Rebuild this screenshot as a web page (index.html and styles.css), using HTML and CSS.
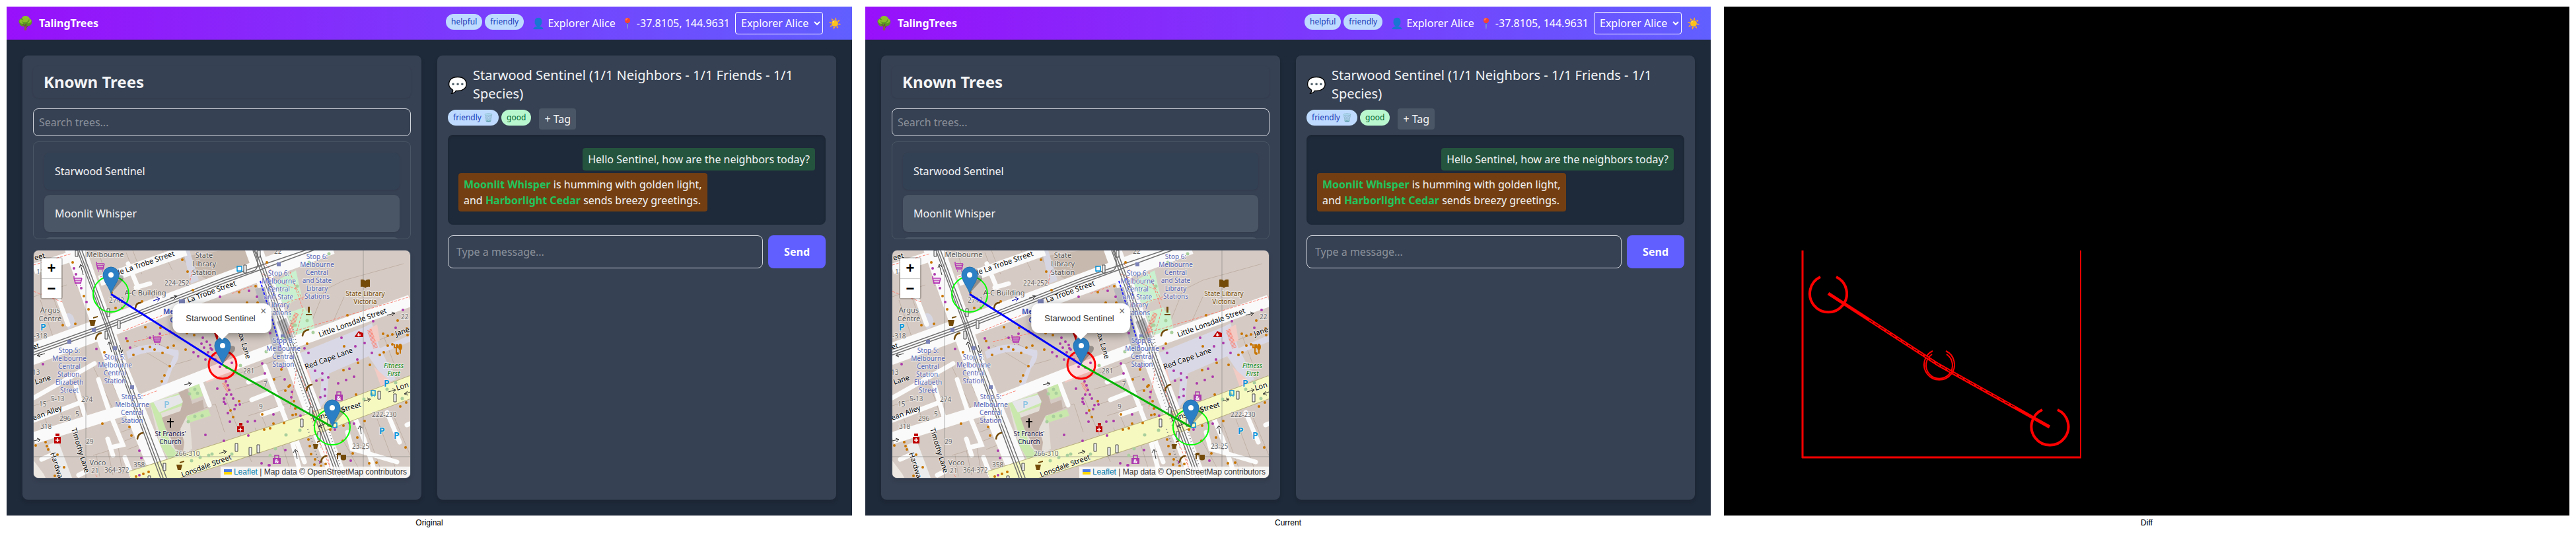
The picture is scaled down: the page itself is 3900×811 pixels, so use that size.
FILE: index.html
```html
<!DOCTYPE html>
<html lang="en">
<head>
<meta charset="utf-8">
<meta name="viewport" content="width=device-width, initial-scale=1">
<title>TalingTrees comparison</title>
<link rel="stylesheet" href="styles.css">
</head>
<body>
<main class="compare">
  <figure class="shot">
    <div class="pane" data-pane></div>
    <figcaption class="caption">Original</figcaption>
  </figure>
  <figure class="shot">
    <div class="pane" data-pane></div>
    <figcaption class="caption">Current</figcaption>
  </figure>
  <figure class="shot">
    <div class="pane diff">
      <svg class="diff-art" viewBox="0 0 1280 770" fill="none" stroke="#f00" aria-label="Changed pixels">
        <path d="M119 369V683" stroke-width="3"/>
        <path d="M540 369V683" stroke-width="2"/>
        <path d="M118 682H541" stroke-width="3"/>
        <path d="M146 409A28 28 0 1 0 170 409M482 610A28 28 0 1 0 505 610" stroke-width="4"/>
        <path d="M316 521A23 23 0 1 0 336 521M315 526A20 20 0 1 0 337 526" stroke-width="2"/>
        <path d="M158 434L325 542L493 636" stroke-width="5"/>
        <path d="M220 474L325 542L440 606" stroke="#000" stroke-width="1" stroke-dasharray="7 3"/>
      </svg>
    </div>
    <figcaption class="caption">Diff</figcaption>
  </figure>
</main>

<template id="pane-template">
  <header class="topbar">
    <div class="brand"><span class="brand-icon">🌳</span><span class="brand-name">TalingTrees</span></div>
    <div class="topbar-info">
      <div class="tags"><span class="tag blue">helpful</span><span class="tag blue">friendly</span></div>
      <span class="info">👤 Explorer Alice</span>
      <span class="info">📍 -37.8105, 144.9631</span>
      <select class="user-select" aria-label="User"><option>Explorer Alice</option></select>
      <button class="theme" type="button" aria-label="Toggle theme">☀️</button>
    </div>
  </header>
  <div class="content">
    <section class="card">
      <h1 class="card-title">Known Trees</h1>
      <input class="search" type="text" placeholder="Search trees..." aria-label="Search trees">
      <ul class="tree-list">
        <li class="tree selected">Starwood Sentinel</li>
        <li class="tree">Moonlit Whisper</li>
        <li class="tree">Harborlight Cedar</li>
      </ul>
      <div class="map">
        <svg class="map-art" viewBox="0 0 570 344" preserveAspectRatio="xMidYMid slice" aria-label="Street map">
          <rect width="570" height="344" fill="#d6cbc4"/>
          <!-- plot outlines -->
          <g stroke="#bfb0a6" stroke-width="1" fill="none">
            <path d="M0 70L50 52M10 75L36 150M28 66L44 112M100 8L112 45M140 3L155 42M150 0L164 36M175 60L185 80M195 0L210 30M60 212L80 270M90 175L120 240M110 180L125 215M128 262L158 252M132 275L162 264M138 288L166 277M142 301L172 290M90 310L130 298M100 342L95 310M120 340L112 302M135 338L128 298M158 255L192 344M170 130L205 150M152 143L205 175L240 165M235 248L275 232L289 275M289 220L330 320M300 190L370 165M305 210L375 190M315 232L380 210M325 250L390 230M335 268L345 300M345 250L362 290M390 280L400 320M375 290L392 344M420 110L440 60L470 45L560 20M450 115L470 70M405 190L420 230M500 120L520 175M530 130L545 170M570 118L510 140M0 235L45 220M15 247L20 262M40 240L46 258M470 290L500 344M500 262L530 344M520 255L548 330M545 250L570 310"/>
          </g>
          <path d="M222 10L285 0H330L335 24L300 34L262 44L240 30Z" fill="#c8b9ae"/>
          <path d="M226 0L236 0L250 45L238 50ZM47 97Q55 92 60 100L64 112L52 120Z" fill="#d6d6e2"/>
          <!-- plazas -->
          <g fill="#d9d8e6">
            <path d="M140 153Q175 135 200 147L219 151Q222 165 210 178L198 212L190 210L212 160Q180 145 143 164Z"/>
            <path d="M401 156L500 116L512 110L524 148L570 128L570 138L528 155L548 195L534 200L507 160L420 198ZM436 190L447 186L444 225L432 240Z"/>
          </g>
          <path d="M508 118L520 112L524 136L516 140ZM515 176L548 205L528 212ZM258 192L295 176L305 184L290 190L262 200ZM400 180L415 175L430 235L418 240Z" fill="#f2cbc4"/>
          <!-- lanes -->
          <g stroke="#fbfbfb" fill="none" stroke-width="7" stroke-linecap="round">
            <path d="M37 72L52 112M0 223L92 171M0 257L68 231M64 205L78 252M98 195L114 243L135 294L117 298M112 285L120 310M138 313L150 344M253 200L266 234M12 316L30 308M68 340L80 334M155 56L176 50M143 20L158 56M325 199L355 189M330 226L358 215M346 248L376 238M350 175L384 262L406 344M395 280L410 320M475 275L482 300L550 320M487 255L500 285L515 330M535 245L554 290M565 264L570 262"/>
          </g>
          <path d="M0 344V318L15 338L18 344Z" fill="#eee8e2"/>
          <path d="M22 294L37 288L58 344H40Z" fill="#ececec"/>
          <!-- parks and church -->
          <path d="M176 230L228 210L235 240L240 300L207 323L190 290Z" fill="#e4dfd8"/>
          <path d="M176 230L188 232L216 320L206 323ZM177 231L226 214L228 234L190 247ZM233 203L250 200L256 220L240 226ZM231 251L264 240L268 250L234 261ZM186 285L202 290L222 310L206 318Z" fill="#c9e8ac"/>
          <path d="M181 229L222 218L226 230L190 245Z" fill="#e6e6e9"/>
          <path d="M194 253L222 243L226 228L219 215L233 209L240 232L256 226L258 240L232 250L222 270L228 290L226 305L214 300L208 285L200 270Z" fill="#c3b2a8"/>
          <path d="M360 50L397 30L406 70L380 84ZM383 95L410 86L428 124L396 130ZM400 95L420 90L426 122Z" fill="#c9f0cf"/>
          <!-- main streets -->
          <g fill="none" stroke="#fafafa">
            <path d="M0 28L60 8M100 46L230 0" stroke-width="16"/>
            <path d="M0 284L132 243L169 224L279 181L359 151L570 76" stroke-width="18"/>
            <path d="M62 -5L128 181L198 350" stroke-width="31"/>
            <path d="M-5 158L289 50L450 -10" stroke-width="32"/>
            <path d="M332 -5L399 181L464 350" stroke-width="26"/>
          </g>
          <path d="M149 350L289 306L426 261L575 205" fill="none" stroke="#b9b07e" stroke-width="34"/>
          <path d="M149 350L289 306L426 261L575 205" fill="none" stroke="#f6f9c0" stroke-width="32"/>
          <path d="M335 58L366 160L378 155L350 55ZM368 108L380 138L394 132L382 102Z" fill="#b9b9bd"/>
          <!-- footpaths -->
          <g fill="none" stroke="#fa8072" stroke-width="1" stroke-dasharray="4 2">
            <path d="M0 22L56 5M0 62L44 78M135 122L180 104L215 90M345 35L400 60M388 32L408 90L396 130M350 20L362 32M152 138L215 124M392 45L408 76M355 88L410 70M300 65L330 54M405 190L440 290L452 344M398 180L388 240M166 220L188 212M100 40L118 36M90 335L97 344M425 270L455 344M385 125L570 70M240 30L236 50"/>
          </g>
          <path d="M343 46L375 150M354 42L366 72" fill="none" stroke="#22f" stroke-width="2" stroke-dasharray="4 2"/>
          <g fill="none" stroke="#777" stroke-width="2" stroke-dasharray="1 4">
            <path d="M385 150L436 300M395 140L405 180M415 270L440 344M446 270L470 344M340 20L366 60M388 100L400 150"/>
          </g>
          <path d="M508 120L518 148M398 95L386 127M288 200L296 214" fill="none" stroke="#fa8072" stroke-width="7" stroke-dasharray="1 1"/>
          <!-- tram tracks -->
          <g fill="none" stroke="#707070" stroke-width="1.5">
            <path d="M69 0L112 114L132 176L196 344M73 0L116 114L137 176L201 344M66 0L109 114L129 176L192 344"/>
            <path d="M0 154L112 114L289 45L335 30Q344 22 334 0M0 158L112 118L289 49L450 -10M0 150L112 110L289 41L440 -10"/>
            <path d="M332 0L398 178L460 344M336 0L402 178L464 344M340 0L406 178L468 344"/>
          </g>
          <path d="M79 0V344M499 0V344M0 312H570" stroke="#777" stroke-opacity=".55" stroke-width="1"/>
          <g fill="#7a82b8"><path d="M51 135h6v6h-6zM88 117h6v6h-6zM120 145h6v6h-6zM220 74h9v9h-9zM368 18h6v6h-6zM374 127h6v6h-6zM146 204h6v6h-6z"/></g>
          <!-- tree canopies -->
          <path d="M447 5h0M417 18h0M399 54h0M414 106h0M377 133h0M396 113h0M394 113h0M423 124h0M352 153h0M313 174h0M244 210h0M248 216h0M236 217h0M244 251h0M255 250h0M234 259h0M239 318h0M252 313h0M265 310h0M300 308h0M358 310h0M366 300h0M382 279h0M403 272h0M425 255h0M500 225h0M535 210h0M512 217h0M548 200h0M558 224h0M475 238h0M398 238h0M270 308h0M275 320h0" fill="none" stroke="#a9cf9d" stroke-width="5" stroke-linecap="round"/>
          <!-- points of interest -->
          <path d="M59 18h0M76 69h0M83 89h0M124 87h0M134 87h0M164 77h0M241 60h0M63 111h0M44 113h0M169 116h0M192 117h0M142 137h0M107 154h0M151 158h0M165 149h0M176 146h0M183 150h0M195 155h0M203 147h0M206 175h0M212 144h0M225 14h0M233 32h0M230 150h0M118 64h0M243 128h0M232 125h0M353 18h0M336 54h0M311 63h0M323 79h0M339 79h0M475 98h0M414 141h0M470 145h0M491 170h0M529 126h0M536 129h0M543 127h0M551 106h0M565 118h0M566 128h0M543 142h0M536 144h0M530 154h0M524 158h0M551 156h0M469 181h0M509 173h0M375 180h0M364 195h0M381 212h0M386 206h0M394 228h0M396 239h0M397 248h0M392 249h0M346 248h0M298 242h0M302 252h0M311 228h0M349 271h0M358 269h0M363 262h0M379 261h0M388 204h0M416 286h0M418 296h0M420 308h0M426 316h0M425 324h0M488 218h0M490 283h0M469 265h0M468 288h0M449 271h0M501 258h0M483 307h0M508 322h0M519 321h0M563 298h0M555 236h0M564 230h0M104 262h0M145 267h0M148 280h0M18 290h0M20 296h0M22 301h0M36 309h0M46 328h0M32 341h0M3 295h0M155 342h0M166 338h0M174 335h0M198 189h0M194 198h0M435 326h0M442 323h0" fill="none" stroke="#c77400" stroke-width="4" stroke-linecap="round"/>
          <path d="M61 27h0M64 36h0M72 57h0M80 78h0M95 149h0M14 172h0M140 133h0M146 147h0M176 132h0M191 126h0M206 122h0M242 154h0M282 70h0M254 141h0M258 147h0M262 138h0M267 143h0M270 150h0M264 154h0M272 158h0M256 132h0M249 160h0M260 165h0M275 165h0M268 148h0M326 61h0M338 70h0M358 125h0M410 148h0M416 155h0M346 171h0M466 132h0M487 145h0M501 140h0M514 107h0M559 90h0M548 117h0M512 155h0M490 165h0M478 179h0M426 182h0M437 186h0M428 197h0M437 196h0M446 192h0M461 201h0M473 196h0M485 191h0M434 222h0M441 220h0M441 210h0M390 222h0M350 186h0M376 176h0M380 195h0M391 214h0M404 250h0M363 248h0M291 198h0M294 204h0M296 211h0M292 218h0M290 232h0M299 218h0M302 224h0M294 246h0M297 259h0M306 234h0M312 233h0M304 240h0M324 259h0M335 258h0M325 280h0M288 288h0M381 302h0M345 322h0M356 325h0M278 209h0M288 224h0M288 229h0M260 279h0M160 303h0M163 314h0M160 340h0M456 271h0M478 261h0M485 262h0M480 318h0M357 325h0M434 320h0M282 176h0M292 177h0M300 170h0" fill="none" stroke="#ac39ac" stroke-width="4" stroke-linecap="round"/>
          <!-- traffic signals -->
          <g fill="#eee" stroke="#444">
            <path d="M63 0h4v9h-4zM111 88h4v12h-4zM127 106h4v12h-4zM108 122h4v12h-4zM339 0h4v10h-4zM318 22h4v12h-4zM196 322h4v11h-4zM404 255h4v12h-4zM418 237h4v12h-4zM430 274h4v12h-4zM305 292h4v12h-4zM326 298h4v12h-4zM338 294h4v12h-4zM521 213h4v12h-4zM545 217h4v12h-4zM445 254h4v12h-4zM173 341h4v5h-4z"/>
          </g>
          <!-- one-way arrows -->
          <g fill="none" stroke="#333">
            <path d="M75 37L71 22M69 26L71 21L75 25M17 156L6 159M9 156L5 159L10 161M118 154L114 139M112 143L114 138L118 142M130 143L133 154M129 151L133 155L135 150M207 72L216 69M212 68L217 69L213 73M228 203L238 201M234 199L239 201L235 205M535 98L546 95M542 93L547 95L543 99M0 288L9 286M5 284L10 286L6 290M281 307L291 304M287 302L292 304L288 308M500 228L509 225M505 223L510 225L506 229M537 214L547 211M543 209L548 211L544 215M570 214L562 217M566 213L561 217L567 219M442 262L432 266M436 262L431 266L437 268M399 315L396 302M393 306L396 301L400 305M496 278L494 266M491 270L494 265L498 269"/>
            <path d="M181 76L190 73M186 71L191 73L187 77" stroke="#00a"/>
          </g>
          <!-- symbols -->
          <g fill="none" stroke="#b535b5" stroke-width="1.5">
            <path d="M107 20H95L97 28H105L107 20M96 23H106M97 26H105M98 31h1M104 31h1M94 18h2"/>
            <path d="M73 42H61L63 50H71L73 42M62 45H72M63 48H71M64 53h1M70 53h1M60 40h2M193 131H181L183 139H191L193 131M182 134H192M183 137H191M184 142h1M190 142h1M180 129h2"/>
          </g>
          <g fill="none" stroke="#734a08" stroke-width="2.5" stroke-linecap="round">
            <path d="M154 87Q155 79 162 79M94 134Q95 126 102 125M407 129Q408 121 416 120M413 212Q414 204 421 203M157 285Q158 277 165 276M435 320Q436 312 443 311"/>
          </g>
          <g fill="#734a08">
            <path d="M84 105h10l-2 9h-6zM216 324h9l-2 8h-5zM423 293h8l-2 7h-5zM90 101l7-2v2l-7 2zM221 320l7-2v2l-7 2zM429 289l5-2v2l-5 2z"/>
            <path d="M495 44q5-1 7 2q2-3 7-2v11q-5-1-7 2q-2-3-7-2zM415 85h3v9h-3zM412 96h9v2h-9zM459 306h6v4h-4v6h-2zM465 309l8 0v7q-4 3-8 0z"/>
          </g>
          <g fill="#bf0000"><path d="M31 282h10v10h-10zM33 277h6v4h-6zM308 266h10v9h-10zM311 261h5v4h-5zM486 130l6-8l7 3v6h-13zM272 122l8 4l-2 12z"/></g>
          <path d="M36 284v6M33 287h6M313 268v6M310 271h6M492 125v5M490 128h5" stroke="#fff" stroke-width="1.5"/>
          <g fill="#ac39ac"><path d="M456 218h12v9h-12zM362 314h12v9h-12z"/><path d="M459 218v-4h6v4M365 314v-4h6v4" fill="none" stroke="#ac39ac" stroke-width="1.5"/></g>
          <text class="m-icon" x="459" y="226">&amp;</text><text class="m-icon" x="365" y="322">&amp;</text>
          <g fill="none" stroke="#0092da" stroke-width="1.5"><path d="M308 24h7v7h-7zM309 32v1M314 32v1M511 212h6v7h-6zM512 220v1M516 220v1M453 261h6v7h-6z"/></g>
          <path d="M549 142v14M546 142v5h5v-5M555 156v-8" stroke="#c77400" stroke-width="2" fill="none"/><ellipse cx="555" cy="146" rx="3" ry="5" fill="#c77400"/>
          <path d="M207 254V268M202 259H212" stroke="#000" stroke-width="2"/>
          <!-- street names -->
          <g class="m-street">
            <text transform="translate(2 15) rotate(-15)">eet</text>
            <text transform="translate(129 37) rotate(-19)">le La Trobe Street</text>
            <text transform="translate(234 79) rotate(-20)">La Trobe Street</text>
            <text transform="translate(0 150) rotate(-19)">et</text>
            <text transform="translate(3 203) rotate(-18)">Lane</text>
            <text transform="translate(0 257) rotate(-20)">ean Alley</text>
            <text transform="translate(57 270) rotate(73)">Timothy Lane</text>
            <text transform="translate(25 307) rotate(72)">Hardwa</text>
            <text transform="translate(225 343) rotate(-20)">Lonsdale Street</text>
            <text transform="translate(433 131) rotate(-20)">Little Lonsdale Street</text>
            <text transform="translate(412 180) rotate(-20)">Red Cape Lane</text>
            <text transform="translate(308 120) rotate(73)">nox Lane</text>
            <text transform="translate(549 130) rotate(-20)">Jane</text>
            <text transform="translate(423 259) rotate(-17)">Lons</text>
            <text transform="translate(467 245) rotate(-17)">Street</text>
            <text transform="translate(550 212) rotate(-17)">Lon</text>
          </g>
          <!-- house numbers -->
          <g class="m-number">
            <text x="4" y="36">11</text><text x="198" y="53">224-252</text><text x="114" y="79">2742</text>
            <text x="0" y="133">-318</text><text x="-2" y="188">13</text><text x="26" y="228">5-13</text>
            <text x="8" y="236">15</text><text x="39" y="258">296</text><text x="63" y="251">5</text>
            <text x="72" y="229">274</text><text x="10" y="270">318</text><text x="79" y="293">29</text>
            <text x="87" y="337">21</text><text x="107" y="336">364-372</text><text x="151" y="328">358</text>
            <text x="214" y="311">266-310</text><text x="364" y="5">22</text><text x="556" y="104">22</text>
            <text x="317" y="186">281</text><text x="348" y="206">7</text><text x="341" y="240">9</text>
            <text x="512" y="252">222-230</text><text x="482" y="300">23-25</text>
          </g>
          <g class="m-place">
            <text x="108" y="10">Melbourne</text>
            <text x="258" y="11">State<tspan x="258" dy="13">Library</tspan><tspan x="258" dy="13">Station</tspan></text>
            <text x="169" y="68">A-C Building</text>
            <text x="25" y="94">Argus<tspan x="25" dy="13">Centre</tspan></text>
            <text x="97" y="325">Voco</text>
          </g>
          <text class="m-place m-navy" x="207" y="281">St Francis'<tspan x="207" dy="12">Church</tspan></text>
          <text class="m-place m-brown" x="502" y="69">State Library<tspan x="502" dy="12">Victoria</tspan></text>
          <text class="m-place m-green" x="545" y="178">Fitness<tspan x="545" dy="12">First</tspan></text>
          <g class="m-stop">
            <text x="54" y="155">Stop 5:<tspan x="54" dy="12">Melbourne</tspan><tspan x="54" dy="12">Central</tspan><tspan x="54" dy="12">Station,</tspan><tspan x="54" dy="12">Elizabeth</tspan><tspan x="54" dy="12">Street</tspan></text>
            <text x="123" y="165">Stop 5:<tspan x="123" dy="12">Melbourne</tspan><tspan x="123" dy="12">Central</tspan><tspan x="123" dy="12">Station</tspan></text>
            <text x="149" y="225">Stop 5:<tspan x="149" dy="12">Melbourne</tspan><tspan x="149" dy="12">Central</tspan><tspan x="149" dy="12">Station</tspan></text>
            <text x="371" y="38">Stop 6:<tspan x="371" dy="12">Melbourne</tspan><tspan x="371" dy="12">Central</tspan><tspan x="371" dy="12">and State</tspan><tspan x="371" dy="12">Library</tspan><tspan x="371" dy="12">Stations</tspan></text>
            <text x="429" y="13">Stop 6:<tspan x="429" dy="12">Melbourne</tspan><tspan x="429" dy="12">Central</tspan><tspan x="429" dy="12">and State</tspan><tspan x="429" dy="12">Library</tspan><tspan x="429" dy="12">Stations</tspan></text>
            <text x="378" y="140">Stop 8:<tspan x="378" dy="12">Melbourne</tspan><tspan x="378" dy="12">Central</tspan><tspan x="378" dy="12">Station</tspan></text>
          </g>
          <g class="m-parking">
            <text x="10" y="121">P</text><text x="530" y="206">P</text><text x="523" y="278">P</text><text x="545" y="285">P</text>
            <text x="197" y="238" opacity=".4">P</text>
          </g>
          <text class="m-station" x="196" y="96">Me<tspan x="206" dy="13">C</tspan></text>
          <!-- links between trees -->
          <g fill="none">
            <circle cx="117" cy="66" r="27" stroke="#0f0" stroke-width="2"/>
            <circle cx="452" cy="267" r="27" stroke="#0f0" stroke-width="2"/>
            <circle cx="286" cy="173" r="21" stroke="#f00" stroke-width="3" fill="#f00" fill-opacity=".12"/>
            <path d="M117 66L286 173" stroke="#00f" stroke-width="3"/>
            <path d="M286 173L452 267" stroke="#00b400" stroke-width="3"/>
          </g>
          <g class="pins">
            <g transform="translate(117 65)"><path d="M0 0L10 -27Q22 -30 18 -20Z" fill="#000" opacity=".3"/><path d="M0 0C-3 -10 -12 -19 -12 -28A12 12 0 0 1 12 -28C12 -19 3 -10 0 0Z" fill="#2b80c5" stroke="#2470ae"/><circle cy="-28" r="4" fill="#fff"/></g>
            <g transform="translate(286 172)"><path d="M0 0L10 -27Q22 -30 18 -20Z" fill="#000" opacity=".3"/><path d="M0 0C-3 -10 -12 -19 -12 -28A12 12 0 0 1 12 -28C12 -19 3 -10 0 0Z" fill="#2b80c5" stroke="#2470ae"/><circle cy="-28" r="4" fill="#fff"/></g>
            <g transform="translate(452 266)"><path d="M0 0L10 -27Q22 -30 18 -20Z" fill="#000" opacity=".3"/><path d="M0 0C-3 -10 -12 -19 -12 -28A12 12 0 0 1 12 -28C12 -19 3 -10 0 0Z" fill="#2b80c5" stroke="#2470ae"/><circle cy="-28" r="4" fill="#fff"/></g>
          </g>
        </svg>
        <div class="zoom">
          <button class="zoom-btn" type="button" aria-label="Zoom in">+</button>
          <button class="zoom-btn" type="button" aria-label="Zoom out">−</button>
        </div>
        <div class="popup">Starwood Sentinel<button class="popup-close" type="button" aria-label="Close popup">×</button></div>
        <div class="credit">
          <svg class="flag" viewBox="0 0 12 8"><path fill="#4c7be1" d="M0 0h12v4H0z"/><path fill="#ffd500" d="M0 4h12v4H0z"/></svg>
          <a class="credit-link" href="#">Leaflet</a> | Map data © OpenStreetMap contributors
        </div>
      </div>
    </section>
    <section class="card">
      <div class="chat-head"><span class="chat-icon">💬</span><h2 class="chat-title">Starwood Sentinel (1/1 Neighbors - 1/1 Friends - 1/1 Species)</h2></div>
      <div class="tag-row">
        <div class="tags"><span class="tag blue">friendly 🗑️</span><span class="tag green">good</span></div>
        <button class="add-tag" type="button">+ Tag</button>
      </div>
      <div class="chat">
        <p class="message mine">Hello Sentinel, how are the neighbors today?</p>
        <p class="message"><b class="name">Moonlit Whisper</b> is humming with golden light,<br>and <b class="name">Harborlight Cedar</b> sends breezy greetings.</p>
      </div>
      <form class="composer">
        <input class="composer-input" type="text" placeholder="Type a message..." aria-label="Message">
        <button class="send" type="button">Send</button>
      </form>
    </section>
  </div>
</template>
<script src="app.js"></script>
</body>
</html>
```
FILE: styles.css
```css
* { box-sizing: border-box; }
body, h1, h2, p, ul, figure { margin: 0; padding: 0; }
body { background: #fff; font-family: "Noto Sans", sans-serif; font-size: 16px; line-height: 24px; color: #f3f4f6; }
button, input, select { font: inherit; color: inherit; }
button { border: 0; padding: 0; background: none; cursor: pointer; }

.compare { display: grid; grid-template-columns: repeat(3, 1fr); min-height: 100vh; }
.shot { display: flex; flex-direction: column; padding: 10px 10px 12px; min-width: 0; }
.pane { flex: 1; display: flex; flex-direction: column; background: #1e2939; }
.diff { background: #000; }
.diff-art { display: block; width: 100%; }
.caption { padding-top: 4px; font: 12px/15px "Liberation Sans", sans-serif; color: #000; text-align: center; }

.topbar { display: flex; align-items: center; justify-content: space-between; padding: 8px 16px; color: #fff; background: linear-gradient(to right, #9810fa, #615fff); }
.brand { display: flex; gap: 8px; }
.brand-icon { font-size: 20px; }
.brand-name { font-weight: 700; }
.topbar-info { display: flex; align-items: center; gap: 8px; }
.tags { display: flex; }
.tag { margin: 0 4px 4px 0; padding: 4px 8px; border-radius: 12px; font-size: 12px; line-height: 16px; }
.blue { background: #bedbff; color: #193cb8; }
.green { background: #b9f8cf; color: #016630; }
.user-select { height: 34px; padding: 4px; border: 1px solid #fff; border-radius: 4px; background: transparent; }

.content { flex: 1; display: grid; grid-template-columns: 1fr 1fr; gap: 24px; padding: 24px; }
.card { padding: 16px; border-radius: 8px; background: #364153; box-shadow: 0 4px 6px rgba(0, 0, 0, .1); min-width: 0; }
.card-title { margin-bottom: 16px; padding: 8px 16px; border-radius: 8px; font-size: 24px; line-height: 32px; font-weight: 700; box-shadow: 0 1px 3px rgba(0, 0, 0, .1); }
.search, .composer-input { width: 100%; border: 1px solid #d1d5dc; border-radius: 8px; background: transparent; }
.search { display: block; height: 42px; padding: 8px; }
.search::placeholder, .composer-input::placeholder { color: #8b919b; }
.tree-list { height: 148px; margin: 8px 0 16px; padding: 16px; overflow: hidden; border: 1px solid #4a5565; border-radius: 8px; list-style: none; }
.tree { margin-bottom: 8px; padding: 16px; border-radius: 8px; background: #4a5565; box-shadow: 0 1px 3px rgba(0, 0, 0, .1); }
.selected { background: #334155; }

.map { position: relative; height: 346px; overflow: hidden; border: 1px solid #4a5565; border-radius: 8px; box-shadow: 0 4px 6px rgba(0, 0, 0, .1); font-family: "Liberation Sans", sans-serif; color: #333; }
.map-art { display: block; width: 100%; height: 100%; font-family: "Noto Sans", sans-serif; }
.map-art text { paint-order: stroke; stroke: #fff; stroke-opacity: .5; stroke-width: 2px; stroke-linejoin: round; }
.m-street { font-size: 11px; fill: #000; }
.m-number { font-size: 10px; fill: #666; }
.m-place { font-size: 11px; fill: #555; text-anchor: middle; }
.m-navy { font-size: 10px; fill: #11114d; }
.m-brown { font-size: 10px; fill: #734a08; }
.m-green { font-size: 10px; font-style: italic; fill: #148a1c; }
.m-stop { font-size: 10px; fill: #5565b5; text-anchor: middle; }
.m-station { font-size: 11px; font-weight: 700; fill: #4455bb; }
.m-parking { font-size: 14px; font-weight: 600; fill: #0092da; }
.map-art .m-icon { font-size: 8px; font-weight: 700; fill: #fff; stroke: none; }

.zoom { position: absolute; top: 10px; left: 10px; display: grid; border: 2px solid rgba(0, 0, 0, .2); border-radius: 4px; background-clip: padding-box; }
.zoom-btn { width: 30px; height: 30px; background: #fff; color: #000; font: bold 22px/30px "Liberation Sans", sans-serif; }
.zoom-btn + .zoom-btn { border-top: 1px solid #ccc; }
.popup { position: absolute; top: 80px; left: 50%; transform: translateX(-50%); padding: 13px 24px 13px 20px; border-radius: 12px; background: #fff; box-shadow: 0 3px 14px rgba(0, 0, 0, .4); font-size: 13px; line-height: 19px; white-space: nowrap; }
.popup::after { content: ""; position: absolute; top: 100%; left: 50%; margin-left: -10px; border: 10px solid transparent; border-top-color: #fff; border-bottom: 0; }
.popup-close { position: absolute; top: 0; right: 0; width: 24px; height: 24px; color: #757575; font: 16px/24px "Liberation Sans", sans-serif; }
.credit { position: absolute; right: 0; bottom: 0; padding: 0 5px; background: rgba(255, 255, 255, .8); font-size: 12px; line-height: 17px; white-space: nowrap; }
.flag { width: 12px; height: 8px; }
.credit-link { color: #0078a8; text-decoration: none; }

.chat-head { display: flex; align-items: center; gap: 8px; margin-bottom: 8px; }
.chat-icon { font-size: 24px; line-height: 32px; }
.chat-title { font-size: 20px; line-height: 28px; font-weight: 400; }
.tag-row { display: flex; align-items: center; gap: 8px; margin-bottom: 8px; }
.add-tag { padding: 4px 8px; border-radius: 4px; background: #4a5565; }
.chat { display: flex; flex-direction: column; align-items: flex-start; gap: 4px; margin-bottom: 16px; padding: 20px 16px; border-radius: 8px; background: #1e2939; box-shadow: inset 0 2px 4px rgba(0, 0, 0, .1); }
.message { padding: 5px 8px; border-radius: 4px; background: #733f12; }
.mine { align-self: flex-end; background: #24543e; }
.name { font-weight: 700; color: #22c55e; }
.composer { display: flex; gap: 8px; }
.composer-input { flex: 1; height: 50px; padding: 12px; min-width: 0; }
.send { padding: 0 24px; border-radius: 8px; background: #615fff; color: #fff; font-weight: 700; }
```
FILE: app.js
```js
const template = document.getElementById("pane-template");
document.querySelectorAll("[data-pane]").forEach((pane) => {
  pane.append(template.content.cloneNode(true));
});
```
